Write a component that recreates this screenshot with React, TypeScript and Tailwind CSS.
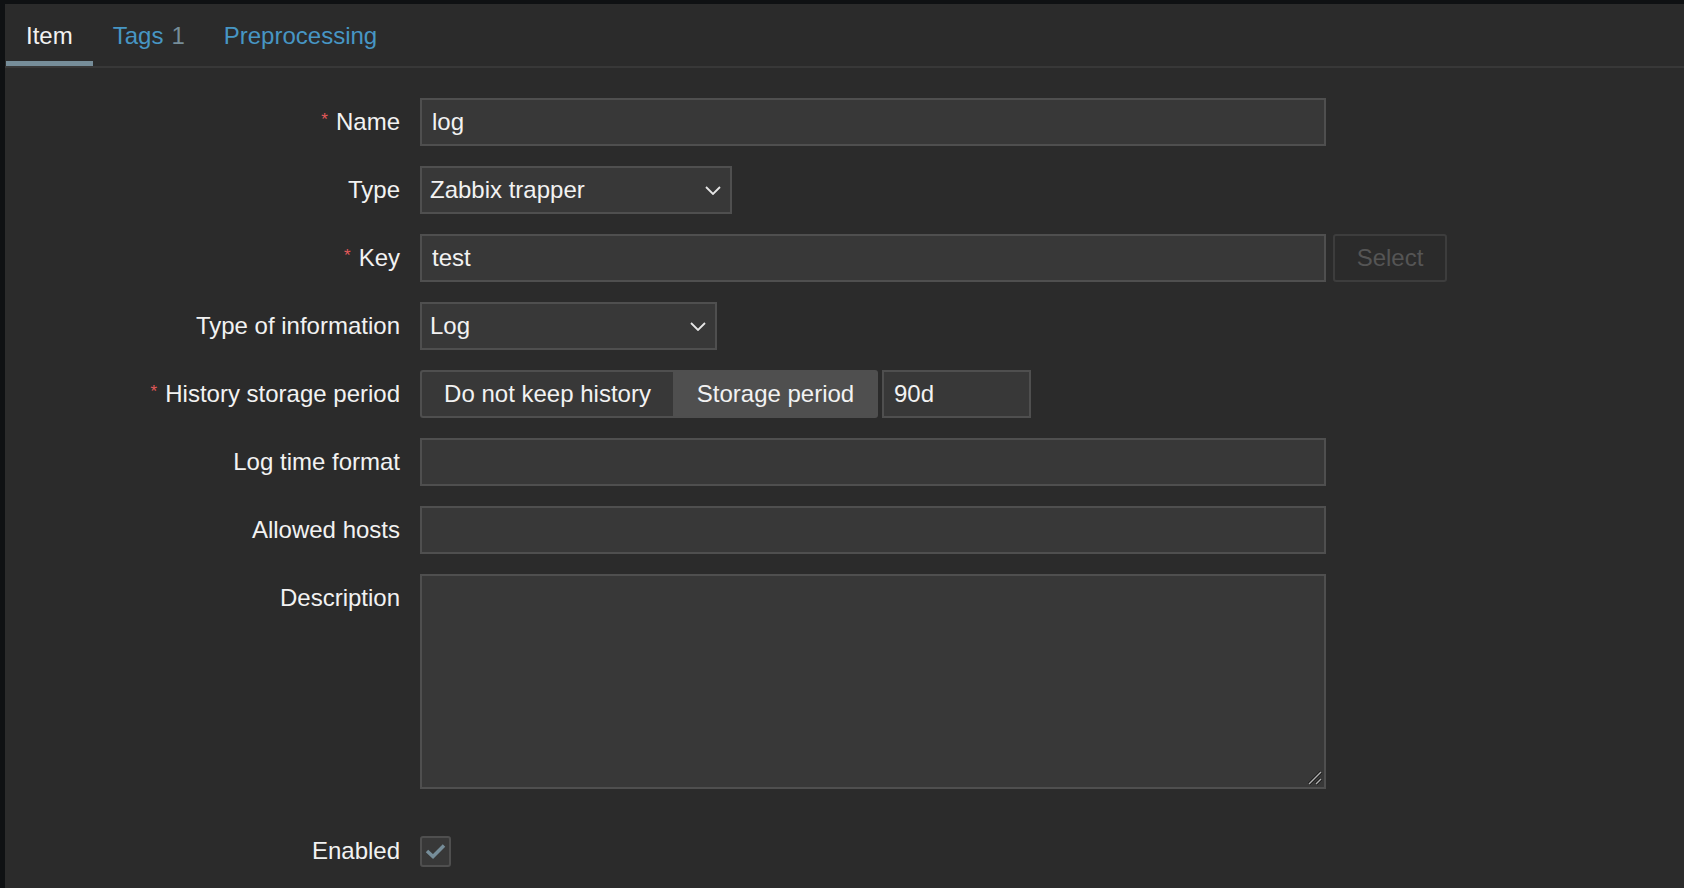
import React from "react";

const font = { fontFamily: '"Liberation Sans", Arial, Helvetica, sans-serif' };

function Req() {
  return <span className="text-[#e45959] text-[17px] leading-none self-start mt-[13px] mr-[8px]">*</span>;
}

function Label({ children, req }: { children: React.ReactNode; req?: boolean }) {
  return (
    <div className="w-[395px] shrink-0 flex justify-end items-center h-[48px]">
      {req && <Req />}
      <span className="text-[24px] text-[#f2f2f2]">{children}</span>
    </div>
  );
}

function Chevron() {
  return (
    <svg width="16" height="9" viewBox="0 0 16 9" className="shrink-0">
      <path d="M1 1 L8 8 L15 1" fill="none" stroke="#e6e6e6" strokeWidth="1.8" />
    </svg>
  );
}

function TextInput({ value, w }: { value?: string; w: string }) {
  return (
    <input
      readOnly
      defaultValue={value ?? ""}
      className={w + " h-[48px] bg-[#383838] border-2 border-[#4f4f4f] px-[10px] text-[24px] text-[#f2f2f2] outline-none"}
      style={font}
    />
  );
}

function SelectBox({ value, w }: { value: string; w: string }) {
  return (
    <div className={w + " h-[48px] bg-[#383838] border-2 border-[#4f4f4f] pl-[8px] pr-[9px] flex items-center justify-between"}>
      <span className="text-[24px] text-[#f2f2f2]">{value}</span>
      <Chevron />
    </div>
  );
}

export default function App() {
  return (
    <div className="w-[1684px] h-[888px] bg-[#0f1113] pt-[4px] pl-[5px] overflow-hidden" style={font}>
      <div className="w-full h-full bg-[#2b2b2b]">
        {/* Tabs */}
        <div className="flex border-b-2 border-[#383838] h-[64px] pl-[1px]">
          <div className="h-[62px] px-[20px] pt-[18px] border-b-[5px] border-[#768d99] text-[24px] leading-[28px] text-[#f2f2f2]">
            Item
          </div>
          <div className="h-[62px] px-[20px] pt-[18px] text-[24px] leading-[28px] text-[#4796c4]">
            Tags<span className="ml-[8px] text-[#768d99]">1</span>
          </div>
          <div className="h-[62px] pl-[19px] pr-[20px] pt-[18px] text-[24px] leading-[28px] text-[#4796c4]">
            Preprocessing
          </div>
        </div>

        {/* Form */}
        <div className="pt-[30px] flex flex-col gap-[20px]">
          <div className="flex gap-[20px]">
            <Label req>Name</Label>
            <TextInput value="log" w="w-[906px]" />
          </div>
          <div className="flex gap-[20px]">
            <Label>Type</Label>
            <SelectBox value="Zabbix trapper" w="w-[312px]" />
          </div>
          <div className="flex gap-[20px]">
            <Label req>Key</Label>
            <div className="flex gap-[7px]">
              <TextInput value="test" w="w-[906px]" />
              <div className="w-[114px] h-[48px] border-2 border-[#3d3d3d] rounded-[3px] flex items-center justify-center text-[24px] text-[#555555]">
                Select
              </div>
            </div>
          </div>
          <div className="flex gap-[20px]">
            <Label>Type of information</Label>
            <SelectBox value="Log" w="w-[297px]" />
          </div>
          <div className="flex gap-[20px]">
            <Label req>History storage period</Label>
            <div className="flex items-center gap-[4px]">
              <div className="flex h-[48px]">
                <div className="w-[253px] h-[48px] bg-[#383838] border-2 border-r-0 border-[#4f4f4f] rounded-l-[3px] flex items-center justify-center text-[24px] text-[#f2f2f2]">
                  Do not keep history
                </div>
                <div className="w-[205px] h-[48px] bg-[#4f4f4f] rounded-r-[3px] flex items-center justify-center text-[24px] text-[#f2f2f2]">
                  Storage period
                </div>
              </div>
              <TextInput value="90d" w="w-[149px]" />
            </div>
          </div>
          <div className="flex gap-[20px]">
            <Label>Log time format</Label>
            <TextInput w="w-[906px]" />
          </div>
          <div className="flex gap-[20px]">
            <Label>Allowed hosts</Label>
            <TextInput w="w-[906px]" />
          </div>
          <div className="flex gap-[20px] mb-[18px]">
            <Label>Description</Label>
            <div className="relative w-[906px] h-[215px] bg-[#383838] border-2 border-[#4f4f4f]">
              <svg width="16" height="16" viewBox="0 0 16 16" className="absolute right-[1px] bottom-[1px]">
                <path d="M2 14 L14 2" stroke="#111" strokeWidth="3" />
                <path d="M9 14 L14 9" stroke="#111" strokeWidth="3" />
                <path d="M2 14 L14 2" stroke="#b0b0b0" strokeWidth="1.5" />
                <path d="M9 14 L14 9" stroke="#b0b0b0" strokeWidth="1.5" />
              </svg>
            </div>
          </div>
          <div className="flex gap-[20px]">
            <Label>Enabled</Label>
            <div className="h-[48px] flex items-center">
              <div className="w-[31px] h-[31px] bg-[#383838] border-2 border-[#4f4f4f] rounded-[3px] flex items-center justify-center">
                <svg width="21" height="16" viewBox="0 0 21 16">
                  <path d="M2 8 L8 13.5 L19 2.5" fill="none" stroke="#768d99" strokeWidth="3.5" />
                </svg>
              </div>
            </div>
          </div>
        </div>
      </div>
    </div>
  );
}
